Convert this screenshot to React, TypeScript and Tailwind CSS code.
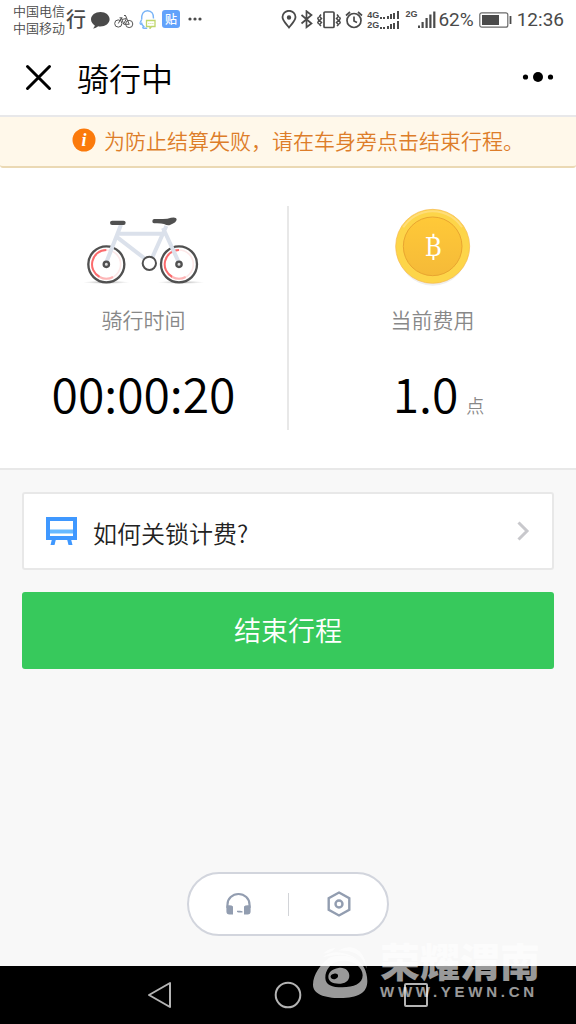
import type { ReactNode } from 'react';

const FONT = "font-['Noto_Sans_CJK_SC',sans-serif]";

function StatusBar() {
  return (
    <div className="flex h-10 items-center justify-between bg-white pr-3 pl-[13px] text-[#4a4a4a]">
      <div className="flex items-center pb-[2px]">
        <div className="text-[13px] leading-[17px]">
          <p>中国电信</p>
          <p>中国移动</p>
        </div>
        <span className="ml-px text-[20px] leading-6 font-medium">行</span>
        {/* Message bubble */}
        <svg className="ml-1 h-5 w-5" viewBox="0 0 20 20" fill="#4a4a4a">
          <path d="M10.5 3C5.300 3 1 6.200 1 10.300c0 2.700 1.600 4.800 3.800 6.100-.2 1.200-.9 2.200-1.800 3 2.100-.1 3.900-.9 5.100-2.100.7.100 1.400.200 2.200.200 5.200 0 9.300-3.100 9.300-7.200S15.700 3 10.500 3z" />
        </svg>
        {/* Bicycle */}
        <svg className="ml-1 h-5 w-5" viewBox="0 0 20 20" fill="none" stroke="#555" strokeWidth="1">
          <circle cx="4.300" cy="14.500" r="3.600" />
          <circle cx="15.200" cy="15" r="3.600" />
          <path d="M4.300 14.500l3-5.500 2.500 6.300h5.400L11.500 6.500M7.800 10.500l4.500-1M5.500 8.800h3M10 6.500h1.800M9.500 15l2.800-5" />
        </svg>
        {/* QQ */}
        <svg className="ml-1 h-5 w-5" viewBox="0 0 20 20" fill="none">
          <path d="M2.200 13.500C1.800 15.300 3 15.800 3.700 14.500c.4 1.600 1.100 2.100 2 2.800-1.400.7-1.200 1.900.5 1.900h3M3.700 10.500C3.300 5 5.300 1.700 9.500 1.700S15.800 5 15.500 9.500" stroke="#79b4f7" strokeWidth="1.400" />
          <path d="M2.200 13.500l1.500-3" stroke="#79b4f7" strokeWidth="1.400" />
          <path d="M8.500 11.500h8.500v6h-3.500l-1.500 2v-2H8.500z" stroke="#bfd66a" strokeWidth="1.300" />
          <path d="M10.500 14.500h.8M12.500 14.500h.8M14.500 14.500h.8" stroke="#bfd66a" />
        </svg>
        <span className="ml-1 flex h-[18px] w-[18px] items-center justify-center rounded-[3px] bg-[#62a2fb] text-[12px] leading-none font-medium text-white">
          贴
        </span>
        <svg className="ml-2 h-1 w-[14px]" viewBox="0 0 14 4" fill="#4a4a4a">
          <circle cx="2" cy="2" r="1.600" />
          <circle cx="7" cy="2" r="1.600" />
          <circle cx="12" cy="2" r="1.600" />
        </svg>
      </div>

      <div className="flex items-center font-['Roboto',sans-serif] text-[19px] leading-6 font-normal">
        {/* Location */}
        <svg className="h-5 w-4" viewBox="0 0 16 20" fill="none" stroke="#4a4a4a" strokeWidth="1.800">
          <path d="M8 17.500C4.500 13 1.500 10.500 1.500 7a6.500 6.200 0 0 1 13 0C14.500 10.500 11.500 13 8 17.500z" />
          <circle cx="8" cy="7.500" r="1.300" fill="#4a4a4a" />
        </svg>
        {/* Bluetooth */}
        <svg className="ml-[3px] h-5 w-[13px]" viewBox="0 0 13 20" fill="none" stroke="#4a4a4a" strokeWidth="1.700">
          <path d="M1.500 5l10 8.500-5 3.800V1.200l5 3.800-10 8.500" />
        </svg>
        {/* Vibrate */}
        <svg className="ml-1 h-5 w-6" viewBox="0 0 24 20" fill="none" stroke="#4a4a4a" strokeWidth="1.700">
          <rect x="7" y="2" width="10" height="15.500" rx="1" />
          <path d="M4 4.500l-1.500 2 2 2-2 2 2 2-2 2 1.500 1.500M1.500 7L.8 8.500l1 2-1 2 .8 1.500M20 4.500l1.500 2-2 2 2 2-2 2 2 2-1.500 1.500M22.500 7l.7 1.500-1 2 1 2-.8 1.500" strokeWidth="1.500" />
        </svg>
        {/* Alarm */}
        <svg className="ml-1 h-5 w-[18px]" viewBox="0 0 18 20" fill="none" stroke="#4a4a4a" strokeWidth="1.700">
          <circle cx="9" cy="10.500" r="7" />
          <path d="M9 6.500V11l3 1.500M1 5.500L5 2M17 5.500L13 2" />
        </svg>
        {/* Two stacked 4G / 2G meters */}
        <div className="ml-1 font-['Liberation_Sans',sans-serif] text-[9px] leading-[10px] font-bold">
          {['4G', '2G'].map((net) => (
            <div key={net} className="flex items-center">
              <span>{net}</span>
              <svg className="h-2 w-[20px]" viewBox="0 0 20 8" fill="#4a4a4a">
                <path d="M1 6h2v2H1zM4 6h2v2H4zM8 5h2v3H8zM11 3h2v5h-2zM14 2h2v6h-2zM18 0h2v8h-2z" />
              </svg>
            </div>
          ))}
        </div>
        <div className="ml-[6px] flex items-start font-['Liberation_Sans',sans-serif] text-[9px] leading-[9px] font-bold">
          <span>2G</span>
          <svg className="h-5 w-[19px]" viewBox="0 0 19 20" fill="#4a4a4a">
            <path d="M1 15.500h2V18H1zM4.500 12h2.200v6H4.500zM8.500 8h2.200v10H8.500zM12.300 4.500h2.200V18h-2.200zM16.200 1.500h2.200V18h-2.200z" />
          </svg>
        </div>
        <span className="ml-[2px]">62%</span>
        {/* Battery */}
        <svg className="ml-[5px] h-4 w-[33px]" viewBox="0 0 33 16" fill="none">
          <rect x=".8" y=".8" width="28" height="14.400" rx="2" stroke="#6a6a6a" strokeWidth="1.200" />
          <rect x="3" y="3" width="17" height="10" fill="#4a4a4a" />
          <path d="M31.500 4v8" stroke="#4a4a4a" strokeWidth="1.800" />
        </svg>
        <span className="ml-[5px]">12:36</span>
      </div>
    </div>
  );
}

function TitleBar() {
  return (
    <header className="flex h-[77px] items-center border-b-2 border-[#e8e8ea] px-[22px] pb-[2px] text-black">
      <button aria-label="关闭">
        <svg className="h-8 w-8" viewBox="0 0 32 32" fill="none" stroke="#000" strokeWidth="3" strokeLinecap="round">
          <path d="M5.500 5.500l22 22M27.500 5.500l-22 22" />
        </svg>
      </button>
      <h1 className="ml-[23px] text-[32px] leading-10">骑行中</h1>
      <button aria-label="更多" className="ml-auto">
        <svg className="h-8 w-8" viewBox="0 0 32 32" fill="#000">
          <circle cx="3.500" cy="16" r="2.600" />
          <circle cx="16" cy="16" r="5" />
          <circle cx="28.500" cy="16" r="2.600" />
        </svg>
      </button>
    </header>
  );
}

function Notice() {
  return (
    <div className="flex h-[51px] items-center justify-center gap-2 rounded-b-[3px] border-b-2 border-[#ebd9b4] bg-[#fff8ea] pb-1 pl-5 text-[#dd7d29]">
      <svg className="h-6 w-6" viewBox="0 0 24 24">
        <circle cx="12" cy="12" r="11.500" fill="#fb7a0b" />
        <text x="12" y="17.500" textAnchor="middle" fill="#fff" fontSize="18" fontWeight="700" fontStyle="italic" fontFamily="'Liberation Serif', serif">i</text>
      </svg>
      <p className="text-[21px] leading-8 whitespace-nowrap">为防止结算失败，请在车身旁点击结束行程。</p>
    </div>
  );
}

function Wheel({ x }: { x: number }) {
  return (
    <g fill="none">
      <circle cx={x} cy="193" r="43" stroke="#fde9e9" strokeWidth="5" />
      <path d={`M${x} 150a43 43 0 0 0-20 81`} stroke="#fb6b6d" strokeWidth="6" />
      <path d={`M${x - 20} 231a43 43 0 0 0 40 0`} stroke="#fdb5b6" strokeWidth="6" />
      <circle cx={x} cy="193" r="54" stroke="#505050" strokeWidth="7" />
    </g>
  );
}

function BikeArt() {
  return (
    <svg className="h-20 w-[120px]" viewBox="41 18 360 240">
      <defs>
        <radialGradient id="ground">
          <stop offset="0" stopColor="#999" stopOpacity=".8" />
          <stop offset="1" stopColor="#bbb" stopOpacity="0" />
        </radialGradient>
      </defs>
      <ellipse cx="108" cy="247" rx="70" ry="5" fill="url(#ground)" />
      <ellipse cx="332" cy="247" rx="70" ry="5" fill="url(#ground)" />
      <Wheel x={108} />
      <Wheel x={326} />
      <g fill="none" stroke="#dbe1eb" strokeWidth="12">
        <path d="M108 187L152 74M142 101h140M137 109l88 68M246 172l42-94M278 84l47 102" />
      </g>
      <circle cx="237" cy="190" r="20" fill="#fff" stroke="#505050" strokeWidth="6" />
      {[108, 326].map((x) => (
        <circle key={x} cx={x} cy="193" r="8" fill="#ddd" stroke="#505050" strokeWidth="7" />
      ))}
      <rect x="119" y="62" width="47" height="13" rx="6.500" fill="#505050" />
      <path d="M251 57q20 1 40-1 26-8 28 1 1 10-20 18-8 2-18-3-10-3-30-2-5 0-5-6t5-7z" fill="#505050" />
    </svg>
  );
}

function CoinArt() {
  return (
    <svg className="h-20 w-20" viewBox="39 18 240 240">
      <defs>
        <linearGradient id="face" x1="0" y1="0" x2="0" y2="1">
          <stop offset="0" stopColor="#ffc938" />
          <stop offset="1" stopColor="#f5ba38" />
        </linearGradient>
      </defs>
      <ellipse cx="158" cy="153" rx="104" ry="104" fill="#efefef" />
      <circle cx="158" cy="139" r="111" fill="#fdd549" stroke="#f6b64c" strokeWidth="2" />
      <path d="M70 82a104 104 0 0 1 176 0" fill="none" stroke="#ffdd78" strokeWidth="6" />
      <circle cx="158" cy="139" r="88" fill="url(#face)" stroke="#e9a530" strokeWidth="3" />
      <g stroke="#fff" strokeWidth="6" fill="#fff">
        <path d="M160 101v14M160 167v13" />
        <text x="160" y="169" textAnchor="middle" strokeWidth="0" fontSize="78" fontWeight="400" fontFamily="'DejaVu Serif Condensed', 'DejaVu Serif', serif">B</text>
      </g>
    </svg>
  );
}

function Stat({ art, label, children }: { art: ReactNode; label: string; children: ReactNode }) {
  return (
    <div className="flex flex-1 flex-col items-center">
      {art}
      <p className="mt-[17px] text-[21px] leading-8 text-[#888]">{label}</p>
      <div className="mt-[21px] flex h-[74px] items-baseline text-[48px] leading-[72px] text-black">{children}</div>
    </div>
  );
}

function Watermark() {
  return (
    <div className="pointer-events-none absolute right-9 bottom-6 flex items-center gap-3 text-white opacity-60">
      <svg className="h-[51px] w-[55px]" viewBox="54 45 165 153" fill="#fff">
        <path fillRule="evenodd" d="M100 79C78 96 54 128 54 158c0 28 34 40 82 40 52 0 81-14 81-51 0-31-15-57-38-67-24-11-55-13-79-1zM130 88c36-9 73 14 73 42 0 26-27 36-61 36-31 0-51-8-51-29 0-22 15-43 39-49z" />
        <path fillRule="evenodd" d="M130 108c18-4 33 8 33 23 0 16-14 24-32 24-18 0-31-7-31-20 0-14 12-24 30-27zM117 125c-7 1-12 6-10 11s8 7 14 5 9-6 8-11-6-7-12-5z" />
        <path d="M82 76q28-22 62-13 32 7 50 26-35-24-68-20-26 2-44 7zM130 56q37-22 65 3 18 20 20 51-11-34-32-45-25-12-53-9zM84 65q17-16 38-17-7 9-21 14z" />
      </svg>
      <div>
        <p className="text-[40px] leading-8 font-black">荣耀渭南</p>
        <p className="mt-2 font-['Liberation_Sans',sans-serif] text-[15px] leading-4 font-bold tracking-[0.25em]">WWW.YEWN.CN</p>
      </div>
    </div>
  );
}

export default function App() {
  return (
    <div className={`relative flex min-h-screen flex-col bg-[#f8f8f8] font-[350] ${FONT}`}>
      <div className="bg-white">
        <StatusBar />
        <TitleBar />
        <Notice />
        <section className="flex border-b-2 border-[#e8e8e8] py-[38px]">
          <Stat art={<BikeArt />} label="骑行时间">
            00:00:20
          </Stat>
          <div className="w-[2px] bg-[#e8e8e8]" />
          <Stat art={<CoinArt />} label="当前费用">
            <span className="pl-3">1.0</span>
            <span className="ml-2 text-[18px] leading-6 text-[#888]">点</span>
          </Stat>
        </section>
      </div>

      <main className="flex flex-1 flex-col px-[22px] pt-[22px]">
        <a href="#help" className="flex h-[78px] items-center rounded-[3px] border-2 border-[#e8e8e8] bg-white px-[22px]">
          <svg className="h-7 w-[31px]" viewBox="0 0 31 28">
            <path d="M6 22h4l-1.500 6h-4zM21 22h4l1.500 6h-4z" fill="#3f98ff" />
            <rect x="2" y="2" width="27" height="19" fill="#fff" stroke="#3f98ff" strokeWidth="4" />
            <rect x="4" y="12.500" width="23" height="4" fill="#67b9ff" />
          </svg>
          <span className="ml-4 pt-1 text-[24px] leading-9 text-[#222]">如何关锁计费?</span>
          <svg className="ml-auto h-5 w-[14px]" viewBox="0 0 14 20" fill="none" stroke="#c8c8cc" strokeWidth="3">
            <path d="M2.500 1.500l8.500 8.500-8.500 8.500" />
          </svg>
        </a>
        <button className="mt-[22px] h-[77px] rounded-[3px] bg-[#37c95c] pb-[2px] text-[27px] leading-10 text-white">结束行程</button>

        <div className="mx-auto mt-auto mb-[30px] flex h-16 w-[202px] items-center justify-center gap-9 rounded-full border-2 border-[#d2d5dd] bg-white">
          <button aria-label="客服">
            <svg className="h-7 w-7" viewBox="0 0 28 28" fill="#929db0">
              <path d="M3.500 18v-3.500a11 10.500 0 0 1 22 0V18" fill="none" stroke="#929db0" strokeWidth="2.200" />
              <path d="M2.400 15.500q5-1 6.600 1V24.500H5.400q-3 0-3-3zM26.600 15.500q-5-1-6.600 1V24.500h3.600q3 0 3-3zM13 20.800h3l2.500.5v1.200H14.500l-1.500-.5z" />
            </svg>
          </button>
          <div className="h-[23px] w-px bg-[#d2d4d8]" />
          <button aria-label="设置">
            <svg className="h-7 w-7" viewBox="0 0 28 28" fill="none" stroke="#929db0" strokeWidth="2.400">
              <path d="M14 2.500l10.300 5.700v11.600L14 25.500 3.700 19.800V8.200z" />
              <circle cx="14" cy="14" r="3.500" />
            </svg>
          </button>
        </div>
      </main>

      <nav className="flex h-[58px] items-center justify-center gap-[100px] bg-black">
        <button aria-label="返回">
          <svg className="h-7 w-7" viewBox="0 0 28 28" fill="none" stroke="#b4b4b4" strokeWidth="2" strokeLinejoin="round">
            <path d="M24 2v24L3 14z" />
          </svg>
        </button>
        <button aria-label="主页">
          <svg className="h-7 w-7" viewBox="0 0 28 28" fill="none" stroke="#b4b4b4" strokeWidth="2">
            <circle cx="14" cy="14" r="12.300" />
          </svg>
        </button>
        <button aria-label="最近任务">
          <svg className="h-7 w-7" viewBox="0 0 28 28" fill="none" stroke="#b4b4b4" strokeWidth="2">
            <rect x="3" y="3" width="22" height="22" rx="1" />
          </svg>
        </button>
      </nav>
      <Watermark />
    </div>
  );
}
